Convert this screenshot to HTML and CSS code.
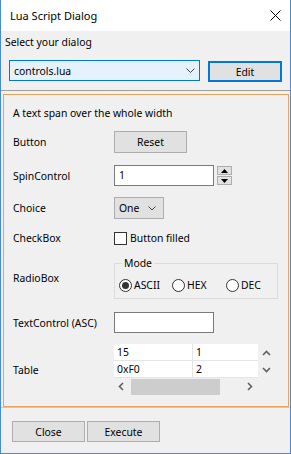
FILE: index.html
```html
<!DOCTYPE html>
<html>
<head>
<meta charset="utf-8">
<link rel="stylesheet" href="styles.css">
</head>
<body>
<div class="window">
  <div class="titlebar">
    <span class="title">Lua Script Dialog</span>
    <svg class="close" width="11" height="11" viewBox="0 0 11 11"><path d="M0.5 0.5 L10.5 10.5 M10.5 0.5 L0.5 10.5" stroke="#000" stroke-width="1"/></svg>
  </div>
  <div class="client">
    <div class="select-label">Select your dialog</div>
    <div class="top-row">
      <div class="combo">
        <span>controls.lua</span>
        <svg width="9" height="5" viewBox="0 0 9 5"><path d="M0.5 0.5 L4.5 4.5 L8.5 0.5" fill="none" stroke="#444" stroke-width="1"/></svg>
      </div>
      <div class="btn btn-default">Edit</div>
    </div>
    <div class="panel">
      <div class="frame">
        <div class="row row-text">A text span over the whole width</div>
        <div class="row row-button">
          <span class="label">Button</span>
          <div class="btn btn-reset">Reset</div>
        </div>
        <div class="row row-spin">
          <span class="label">SpinControl</span>
          <div class="input input-spin">1</div>
          <div class="spin">
            <div class="spin-btn"><svg width="7" height="4" viewBox="0 0 7 4"><path d="M0 4 L3.5 0 L7 4 Z" fill="#000"/></svg></div>
            <div class="spin-btn"><svg width="7" height="4" viewBox="0 0 7 4"><path d="M0 0 L3.5 4 L7 0 Z" fill="#000"/></svg></div>
          </div>
        </div>
        <div class="row row-choice">
          <span class="label">Choice</span>
          <div class="choice">
            <span>One</span>
            <svg width="8" height="5" viewBox="0 0 8 5"><path d="M0.5 0.5 L4 4 L7.5 0.5" fill="none" stroke="#444" stroke-width="1"/></svg>
          </div>
        </div>
        <div class="row row-check">
          <span class="label">CheckBox</span>
          <span class="checkbox"></span>
          <span class="check-text">Button filled</span>
        </div>
        <div class="row row-radio">
          <span class="label">RadioBox</span>
          <fieldset class="group">
            <legend>Mode</legend>
            <div class="radios">
              <span class="radio-item r1"><span class="radio checked"></span>ASCII</span>
              <span class="radio-item r2"><span class="radio"></span>HEX</span>
              <span class="radio-item r3"><span class="radio"></span>DEC</span>
            </div>
          </fieldset>
        </div>
        <div class="row row-textctl">
          <span class="label">TextControl (ASC)</span>
          <div class="input input-text"></div>
        </div>
        <div class="row row-table">
          <span class="label">Table</span>
          <div class="table">
            <div class="table-main">
              <div class="cells">
                <div class="cell c1">15</div><div class="cell c2">1</div>
                <div class="cell c1 last">0xF0</div><div class="cell c2 last">2</div>
              </div>
              <div class="vscroll">
                <svg width="9" height="6" viewBox="0 0 9 6"><path d="M1 5 L4.5 1.5 L8 5" fill="none" stroke="#606060" stroke-width="1.6"/></svg>
                <svg width="9" height="6" viewBox="0 0 9 6"><path d="M1 1 L4.5 4.5 L8 1" fill="none" stroke="#606060" stroke-width="1.6"/></svg>
              </div>
            </div>
            <div class="hscroll">
              <svg width="6" height="9" viewBox="0 0 6 9"><path d="M5 1 L1.5 4.5 L5 8" fill="none" stroke="#606060" stroke-width="1.6"/></svg>
              <div class="thumb"></div>
              <svg class="right" width="6" height="9" viewBox="0 0 6 9"><path d="M1 1 L4.5 4.5 L1 8" fill="none" stroke="#606060" stroke-width="1.6"/></svg>
            </div>
          </div>
        </div>
      </div>
    </div>
    <div class="bottom-row">
      <div class="btn btn-bottom">Close</div>
      <div class="btn btn-bottom">Execute</div>
    </div>
  </div>
</div>
</body>
</html>
```
FILE: styles.css
```css
* { box-sizing: border-box; }
body {
  margin: 0;
  font-family: "Noto Sans", "Open Sans", sans-serif;
  font-size: 10.4px;
  color: #000;
  background: #fff;
}
.window {
  width: 291px;
  height: 454px;
  border: 1px solid #4a8ad0;
  border-top: none;
  display: flex;
  flex-direction: column;
}
.titlebar {
  height: 31px;
  background: #fff;
  display: flex;
  align-items: center;
  padding-left: 9px;
  padding-right: 9px;
}
.title {
  flex: 1;
  font-size: 11px;
}
.close { display: block; }
.client {
  flex: 1;
  background: #f0f0f0;
  display: flex;
  flex-direction: column;
}
.select-label {
  height: 16px;
  line-height: 16px;
  margin-top: 3px;
  padding-left: 4px;
}
.top-row {
  display: flex;
  align-items: flex-start;
  margin-top: 10px;
  padding-left: 8px;
}
.combo {
  width: 191px;
  height: 21px;
  border: 1px solid #0078d7;
  background: #e5f1fb;
  display: flex;
  align-items: center;
  justify-content: space-between;
  padding: 0 4px 0 4px;
}
.btn {
  background: #e1e1e1;
  border: 1px solid #adadad;
  display: flex;
  align-items: center;
  justify-content: center;
}
.btn-default {
  width: 74px;
  height: 21px;
  margin-left: 8px;
  margin-top: 1px;
  border: 2px solid #0078d7;
}
.panel {
  margin-top: 8px;
  border-top: 1px solid #a0a0a0;
  border-bottom: 1px solid #c8c8c8;
  padding: 3px 1px 0 2px;
}
.frame {
  border: 1px solid #e8a45e;
  height: 313px;
  padding: 10px 0 0 9px;
  display: flex;
  flex-direction: column;
}
.row {
  display: flex;
  align-items: center;
}
.label { width: 101px; flex: none; }
.row-text { height: 16px; }
.row-button { margin-top: 10px; height: 22px; }
.btn-reset { width: 73px; height: 22px; }
.row-spin { margin-top: 12px; height: 21px; }
.input {
  background: #fff;
  border: 1px solid #7a7a7a;
  height: 21px;
  width: 100px;
}
.input-spin { padding-left: 4px; line-height: 19px; }
.spin {
  display: flex;
  flex-direction: column;
  gap: 1px;
  margin-left: 3px;
}
.spin-btn {
  width: 15px;
  height: 9px;
  background: #e1e1e1;
  border: 1px solid #adadad;
  display: flex;
  align-items: center;
  justify-content: center;
}
.spin-btn svg { display: block; }
.row-choice { margin-top: 11px; height: 22px; }
.choice {
  width: 50px;
  height: 22px;
  background: #e1e1e1;
  border: 1px solid #adadad;
  display: flex;
  align-items: center;
  justify-content: space-between;
  padding: 0 7px 0 4px;
}
.row-check { margin-top: 12px; height: 14px; }
.checkbox {
  width: 13px;
  height: 13px;
  border: 1px solid #333;
  background: #fff;
  margin-right: 3px;
}
.row-radio { margin-top: 11px; height: 43px; align-items: flex-start; }
.row-radio .label { margin-top: 15px; }
.group {
  margin: 0;
  width: 164px;
  height: 43px;
  border: 1px solid #dcdcdc;
  padding: 0 0 0 4px;
}
.group legend {
  padding: 0 2px;
  margin-left: 3px;
  line-height: 14px;
}
.radios {
  display: flex;
  align-items: center;
  margin-top: 8px;
}
.radio-item { display: flex; align-items: center; }
.r1 { width: 53px; }
.r2 { width: 54px; }
.radio {
  width: 13px;
  height: 13px;
  border: 1px solid #333;
  border-radius: 50%;
  background: #fff;
  margin-right: 2px;
  display: flex;
  align-items: center;
  justify-content: center;
}
.radio.checked::after {
  content: "";
  width: 7px;
  height: 7px;
  border-radius: 50%;
  background: #333;
}
.row-textctl { margin-top: 13px; height: 21px; }
.row-table { margin-top: 11px; height: 51px; }
.table { width: 161px; }
.table-main { display: flex; }
.cells {
  display: grid;
  grid-template-columns: 79px 65px;
  background: #fff;
}
.cell {
  height: 17px;
  line-height: 16px;
  padding-left: 3px;
  border-bottom: 1px solid #e5e5e5;
  background: #fff;
}
.cell.c1 { border-right: 1px solid #e5e5e5; }
.vscroll {
  width: 17px;
  display: flex;
  flex-direction: column;
  align-items: center;
  justify-content: space-around;
}
.vscroll svg { display: block; }
.hscroll {
  width: 144px;
  height: 17px;
  display: flex;
  align-items: center;
  padding-left: 4px;
}
.hscroll svg { display: block; }
.thumb {
  width: 89px;
  height: 16px;
  background: #cdcdcd;
  margin-left: 7px;
}
.hscroll .right { margin-left: 27px; }
.bottom-row {
  display: flex;
  gap: 2px;
  padding-left: 11px;
  margin-top: 13px;
}
.btn-bottom { width: 73px; height: 21px; }
```
